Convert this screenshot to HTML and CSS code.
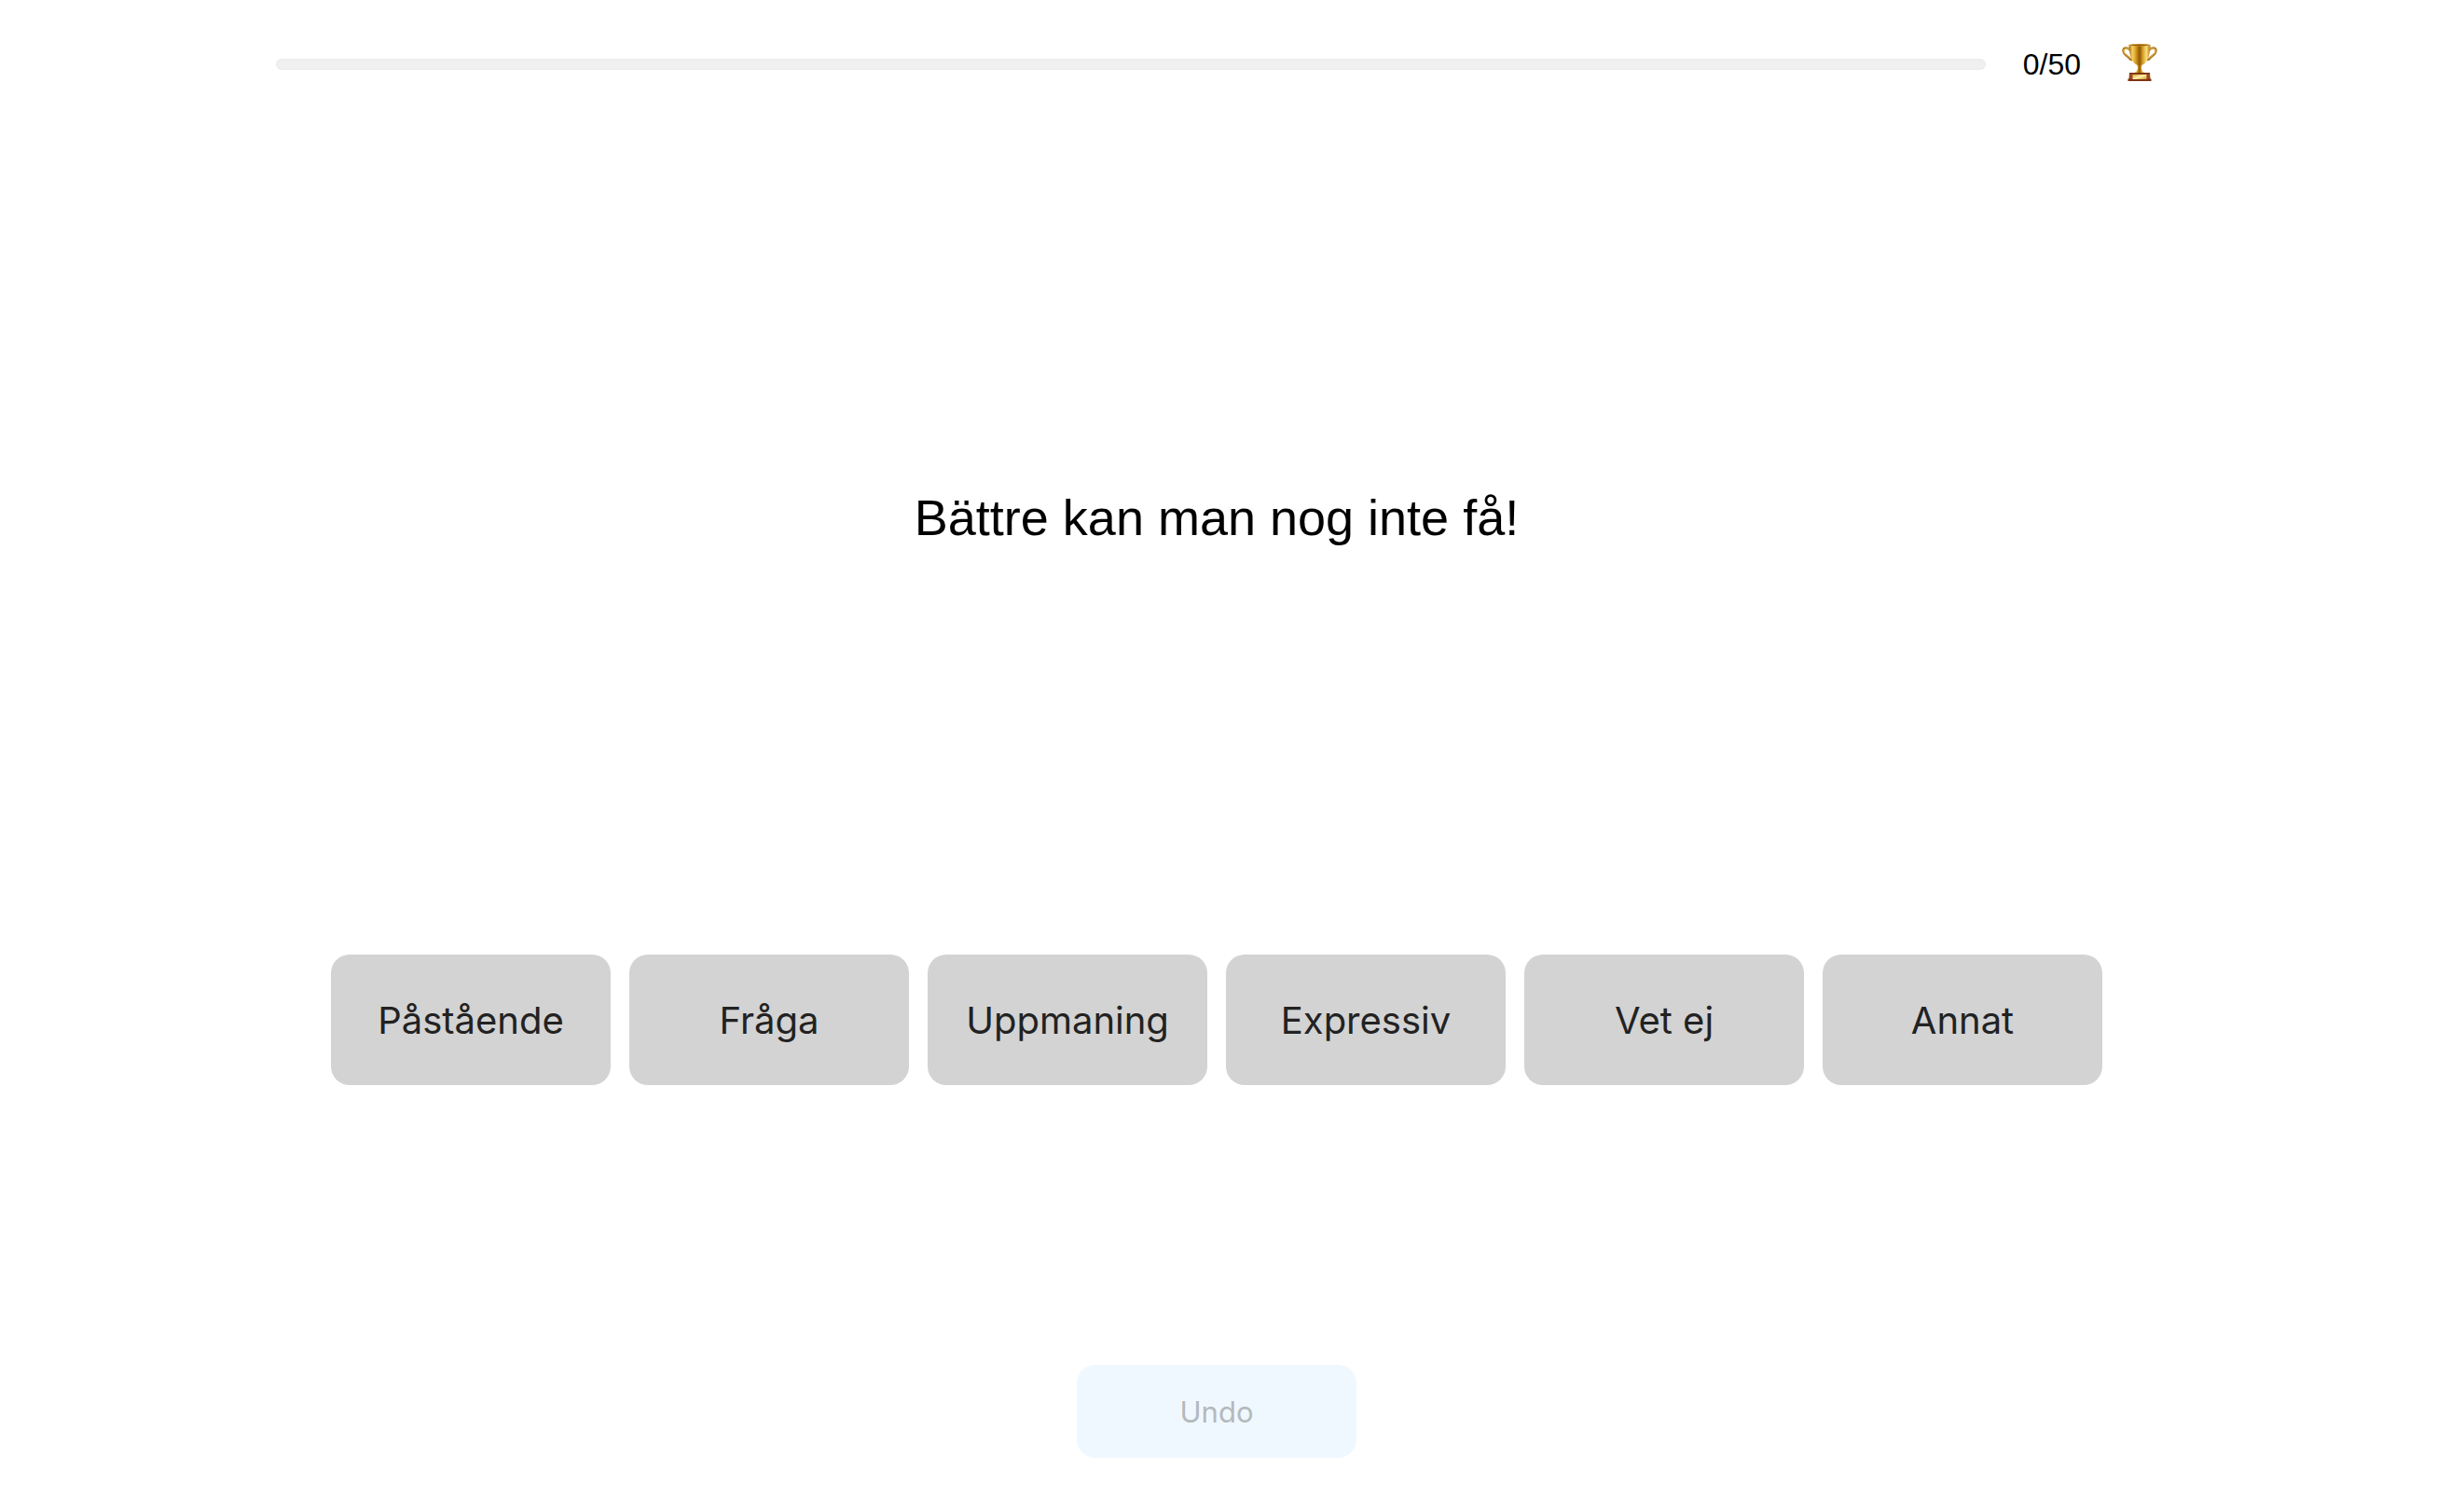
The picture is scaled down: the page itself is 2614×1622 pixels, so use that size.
FILE: index.html
```html
<!DOCTYPE html>
<html lang="sv">
<head>
<meta charset="utf-8">
<meta name="viewport" content="width=device-width, initial-scale=1">
<title>Bättre kan man nog inte få!</title>
<link rel="stylesheet" href="styles.css">
</head>
<body>
<div class="page">
  <header class="status">
    <progress class="status-bar" value="0" max="50" aria-labelledby="count"></progress>
    <span class="status-count" id="count">0/50</span>
    <svg class="trophy" viewBox="0 0 38 40" aria-hidden="true">
      <defs>
        <linearGradient id="gold" x1="0" x2="1" y1="0" y2="0">
          <stop offset="0" stop-color="#a66d12"/>
          <stop offset=".17" stop-color="#f4cf61"/>
          <stop offset=".32" stop-color="#d99d22"/>
          <stop offset=".5" stop-color="#8c5707"/>
          <stop offset=".64" stop-color="#d39a24"/>
          <stop offset=".82" stop-color="#fbe07c"/>
          <stop offset="1" stop-color="#af7412"/>
        </linearGradient>
        <linearGradient id="plate" x1="0" x2="1" y1="0" y2="1">
          <stop offset="0" stop-color="#d8a73b"/>
          <stop offset=".5" stop-color="#fff0a8"/>
          <stop offset="1" stop-color="#cf972d"/>
        </linearGradient>
      </defs>
      <g fill="none" stroke-linecap="round">
        <path d="M9 7C6 3 1 4 1.500 8c.4 4 4.500 4.500 6.500 7.500c.8 1.200 1 2 3 1.500M29 7c3-4 8-3 7.500 1c-.4 4-4.500 4.500-6.500 7.500c-.8 1.200-1 2-3 1.500" stroke="#ad7619" stroke-width="2.400"/>
        <path d="M8 6C5 3.800 1.500 5 2 8c.4 3 4.500 4 6.500 7M30 6c3-2.200 6.500-1 6 2c-.4 3-4.500 4-6.500 7" stroke="#edc65c" stroke-width="1"/>
      </g>
      <path d="M16.500 21h5v3l-.8 1.500.8 2.500c.5 1.800 2.500 2.500 4 4H12.500c1.500-1.500 3.500-2.200 4-4l.8-2.500-.8-1.500z" fill="url(#gold)"/>
      <path d="M7.500 1C8 11 9.500 17 13 20.500c2 2 3.500 2.300 6 2.300s4-.3 6-2.300C28.500 17 30 11 30.500 1z" fill="url(#gold)"/>
      <ellipse cx="19" cy="1.200" rx="11.500" ry="1.200" fill="#cf9b2f"/>
      <ellipse cx="19" cy="1.400" rx="9.500" ry=".7" fill="#8e5c10"/>
      <path d="M8 31h22l.5 7H7.500z" fill="#9c4a21"/>
      <path d="M6.500 37.500h25V40h-25z" fill="#7e3213"/>
      <path d="M8 31h22v1.200H8z" fill="#71300f"/>
      <path d="M11.500 33h15v5h-15z" fill="url(#plate)"/>
    </svg>
  </header>
  <main class="task">
    <h1 class="prompt">Bättre kan man nog inte få!</h1>
    <div class="choices">
      <button class="button choice" type="button">Påstående</button>
      <button class="button choice" type="button">Fråga</button>
      <button class="button choice" type="button">Uppmaning</button>
      <button class="button choice" type="button">Expressiv</button>
      <button class="button choice" type="button">Vet ej</button>
      <button class="button choice" type="button">Annat</button>
    </div>
  </main>
  <footer class="actions">
    <button class="button undo" type="button" disabled>Undo</button>
  </footer>
</div>
</body>
</html>
```
FILE: styles.css
```css
* {
  box-sizing: border-box;
}

body {
  margin: 0;
  padding-right: 4px;
  background: #fff;
  color: #000;
  font-family: "Liberation Sans", Arial, sans-serif;
}

.page {
  display: flex;
  flex-direction: column;
  max-width: 2018px;
  min-height: 100vh;
  margin: 0 auto;
  padding: 47px 0 58px;
}

.status {
  display: flex;
  align-items: center;
  height: 44px;
}

.status-bar {
  flex: 1;
  min-width: 0;
  height: 12px;
  margin-right: 40px;
  border: 0;
  border-radius: 6px;
  overflow: hidden;
  appearance: none;
  background: #f0f0f0;
}

.status-bar::-webkit-progress-bar {
  border-radius: 6px;
  background: #f0f0f0;
  box-shadow: inset 0 0 3px #e6e6e6;
}

.status-bar::-webkit-progress-value {
  background: #4caf50;
}

.status-count {
  margin-right: 44px;
  font-size: 32px;
  line-height: 36px;
}

.trophy {
  align-self: flex-start;
  width: 38px;
  height: 40px;
}

.task {
  flex: 1;
  display: flex;
  flex-direction: column;
}

.prompt {
  flex: 1;
  display: flex;
  align-items: center;
  justify-content: center;
  margin: 0;
  padding-bottom: 6px;
  font-size: 54px;
  font-weight: 400;
  line-height: 64px;
  text-align: center;
}

.choices {
  display: flex;
  flex-wrap: wrap;
  justify-content: center;
  gap: 20px;
}

.button {
  width: 300px;
  padding: 0;
  border: 0;
  border-radius: 20px;
  font-family: Inter, sans-serif;
}

.choice {
  height: 140px;
  background: #d3d3d3;
  color: #222;
  font-size: 40px;
}

.actions {
  display: flex;
  justify-content: center;
  padding-top: 300px;
}

.undo {
  height: 100px;
  background: #f0f8ff;
  color: #b4b9bd;
  font-size: 31px;
}
```
